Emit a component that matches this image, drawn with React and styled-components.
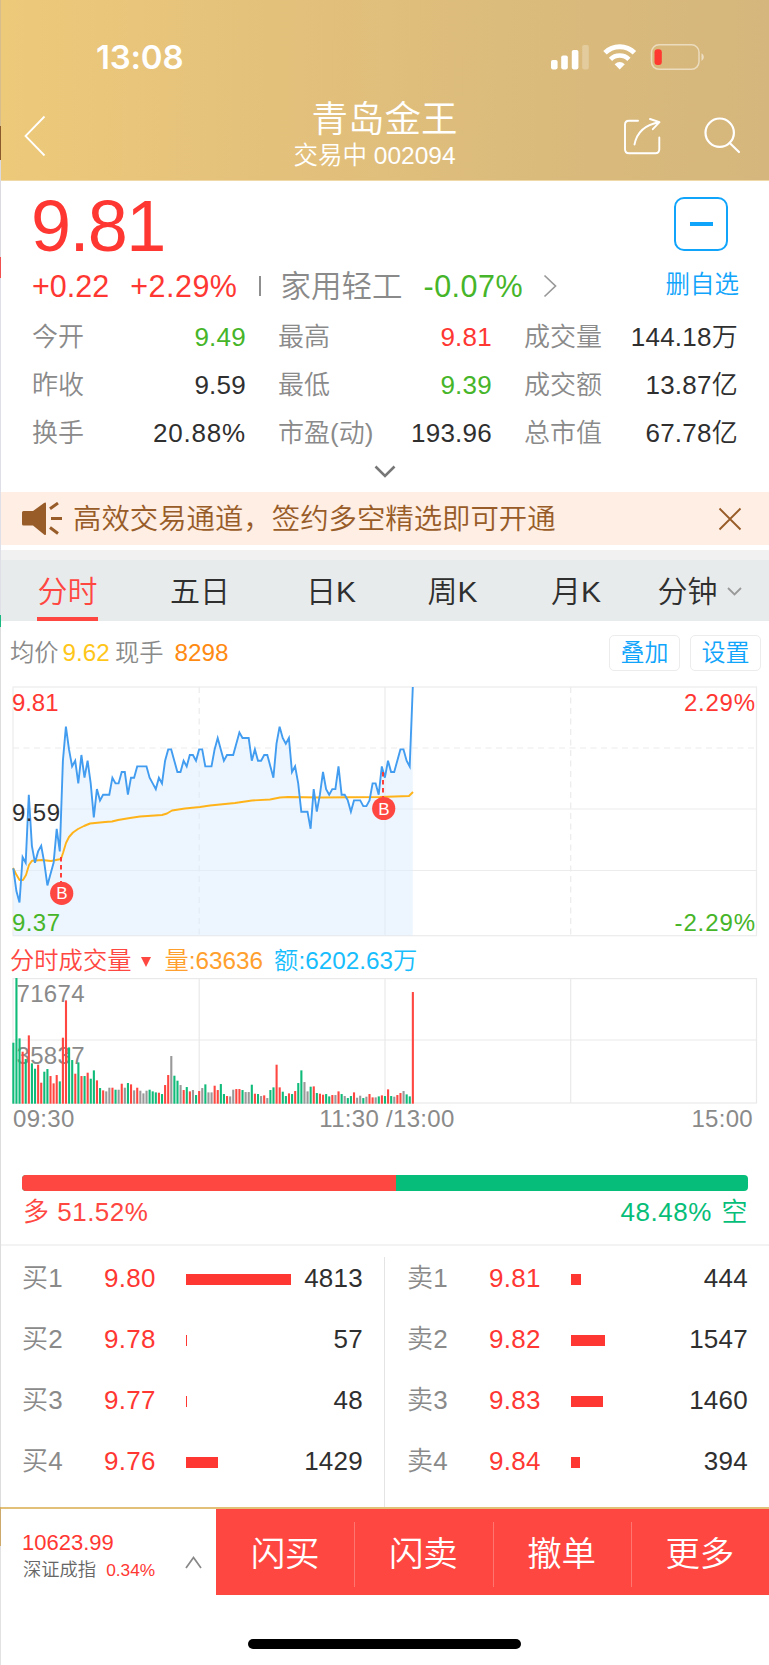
import styled, { createGlobalStyle } from 'styled-components';

const red = '#ff3732';
const fillRed = '#ff4742';
const green = '#46b529';
const barGreen = '#06be79';
const grey = '#8a8a8a';
const dark = '#2f2f2f';
const blue = '#10a4fb';

const GlobalStyle = createGlobalStyle`
* {
    box-sizing: border-box;
}

body {
    margin: 0;
    background: #ffffff;
    font-family: 'Liberation Sans', 'Noto Sans CJK SC', sans-serif;
    font-weight: 350;
}
`

const stats = [
    { name: '今开', value: '9.49', color: green },
    { name: '最高', value: '9.81', color: red },
    { name: '成交量', value: '144.18万' },
    { name: '昨收', value: '9.59' },
    { name: '最低', value: '9.39', color: green },
    { name: '成交额', value: '13.87亿' },
    { name: '换手', value: '20.88%' },
    { name: '市盈(动)', value: '193.96' },
    { name: '总市值', value: '67.78亿' },
]

const buys = [
    { name: '买1', price: '9.80', size: 105, amount: 4813 },
    { name: '买2', price: '9.78', size: 1, amount: 57 },
    { name: '买3', price: '9.77', size: 1, amount: 48 },
    { name: '买4', price: '9.76', size: 32, amount: 1429 },
]

const sells = [
    { name: '卖1', price: '9.81', size: 10, amount: 444 },
    { name: '卖2', price: '9.82', size: 34, amount: 1547 },
    { name: '卖3', price: '9.83', size: 32, amount: 1460 },
    { name: '卖4', price: '9.84', size: 9, amount: 394 },
]

// cents below the day's high, one value per minute
const ticks = [
    32, 36, 38, 30, 31, 19, 28, 31, 29, 28, 31, 35, 33, 31, 25, 29, 13, 7, 11, 14,
    13, 17, 12, 16, 13, 17, 23, 18, 20, 19, 19, 19, 16, 17, 17, 15, 15, 19, 16, 16,
    14, 14, 14, 14, 16, 17, 18, 16, 17, 13, 11, 11, 13, 15, 15, 13, 14, 12, 12, 13,
    11, 11, 14, 14, 14, 11, 9, 11, 13, 12, 12, 12, 10, 8, 9, 9, 9, 13, 11, 13,
    13, 12, 12, 14, 16, 10, 7, 9, 10, 9, 15, 14, 17, 22, 22, 22, 25, 18, 22, 19,
    15, 18, 19, 18, 18, 14, 19, 19, 20, 22, 20, 20, 20, 21, 21, 20, 17, 17, 19, 14,
    16, 13, 15, 15, 13, 11, 11, 13, 14, 0,
]

// direction (r up, g down, n flat) and bar height
const volumes = 'g183 g377 g196 r156 g134 r205 g121 g105 r117 r63 g96 g104 r83 r61 r86 g67 r198 r310 g169 g131 r90 g124 r83 g83 r93 g75 g100 r70 g47 r40 n37 n48 r48 g42 n42 r60 n48 g62 r58 n40 r48 n39 n31 n39 g42 g37 g34 r33 g29 r56 r86 n143 g84 g69 n56 r41 g50 r37 n41 g26 r38 n47 g58 n34 n34 r54 r41 g59 g29 r23 n22 n42 r44 r44 g41 n35 n35 g57 r30 g29 n23 r25 n17 g41 g49 r117 r49 g36 g23 r31 g29 r38 g62 g100 n65 n37 g51 r52 g32 r30 r27 g29 g22 r26 n26 r37 g29 n23 g17 g23 r34 n18 n24 g17 n21 r29 r19 n19 g22 r25 g23 r43 g23 n21 r26 r32 n38 g28 g22 r335'.split(' ')
const volumeColors = { r: '#ff4742', g: '#10bb7a', n: '#999999' }

const step = 3.097
const pointX = i => 13.3 + i * step
const line = ticks.map((t, i) => `${pointX(i).toFixed(1)},${(1 + t * 5.67).toFixed(1)}`).join(' ')
const average = '13,182 16,188 19.5,194 23,194 26,189 29,179 32,174.8 42,174 51,175 61,173 63,167 66,157 69,151 73,146.5 78,143 84,140 90,137.5 105,136 112,135.5 118,134 130,132 140,130.5 162,129 167,127.5 172,124.5 185,122.5 200,121 210,119.5 220,118.5 235,117 252,114.5 270,113.5 280,111.5 288,111 320,111.5 380,111 395,110.5 409,110 413,106'

function StatusIcons() {
    return (
        <svg width="156" height="28" viewBox="550 43 156 28">
            <rect x="551" y="60" width="6.6" height="9.4" rx="1.8" fill="#fff" />
            <rect x="561.2" y="55.5" width="6.6" height="13.9" rx="1.8" fill="#fff" />
            <rect x="571.8" y="50" width="6.6" height="19.4" rx="1.8" fill="#fff" />
            <rect x="582.2" y="45" width="6.6" height="24.4" rx="1.8" fill="#fff" opacity="0.25" />
            <path d="M605 52.8a21 21 0 0 1 29.4 0" fill="none" stroke="#fff" strokeWidth="5" />
            <path d="M610.5 59.3a13 13 0 0 1 18.4 0" fill="none" stroke="#fff" strokeWidth="4.6" />
            <path d="M614.6 64.3q5.1-4.6 10.2 0l-5.1 5.2z" fill="#fff" />
            <rect x="651.5" y="44.8" width="47.5" height="24.5" rx="7.5" fill="none" stroke="#fff" strokeWidth="1.5" opacity="0.5" />
            <rect x="654.5" y="49.3" width="7.3" height="15.6" rx="3" fill="#ff3830" />
            <path d="M701.5 53.2q2.3 1 2.3 3.9t-2.3 3.9z" fill="#fff" opacity="0.55" />
        </svg>
    )
}

function PriceChart() {
    return (
        <Chart width="768" height="252" viewBox="1 0 768 252">
            <g stroke="#ececec" strokeWidth="1.2" fill="none">
                <rect x="13" y="1" width="743.5" height="248.7" />
                <path d="M13 123H756M13 184.5H756M385 1V249.5" />
                <path d="M13 62H756M199.2 1V249.5M570.7 1V249.5" strokeDasharray="6 4.5" />
            </g>
            <polygon points={`13.3,249.5 ${line} 412.8,249.5`} fill="#dcedfd" opacity="0.5" />
            <polyline points={average} fill="none" stroke="#ffb31a" strokeWidth="1.9" strokeLinejoin="round" />
            <polyline points={line} fill="none" stroke="#429cf0" strokeWidth="1.9" strokeLinejoin="miter" />
            <g fontSize="24">
                <text x="12" y="25" fill={red} textLength="46.5">9.81</text>
                <text x="12" y="135" fill={dark} textLength="48">9.59</text>
                <text x="12" y="245" fill={green} textLength="48">9.37</text>
                <text x="684" y="25" fill={red} textLength="71">2.29%</text>
                <text x="674.5" y="245" fill={green} textLength="80.5">-2.29%</text>
            </g>
            <BuyMark x={61.7} y={207.3} top={171} />
            <BuyMark x={383.7} y={122.5} top={86} />
        </Chart>
    )
}

function BuyMark({ x, y, top }) {
    return (
        <g>
            <path d={`M${x - 0.7} ${top}V${y - 11}`} stroke={red} strokeWidth="1.9" strokeDasharray="4.5 3.5" />
            <circle cx={x} cy={y} r="11.6" fill={fillRed} />
            <text x={x + 0.2} y={y + 6} fill="#fff" fontSize="17" textAnchor="middle">B</text>
        </g>
    )
}

function VolumeChart() {
    return (
        <Chart width="768" height="127" viewBox="1 977 768 127">
            <g stroke="#e9e9e9" strokeWidth="1.2" fill="none">
                <rect x="13" y="978.6" width="743.5" height="124.4" />
                <path d="M13 1040H756M199.2 978V1103M385 978V1103M570.7 978V1103" />
            </g>
            <text x="16.5" y="1002" fontSize="24" textLength="68" fill={grey}>71674</text>
            <text x="16.5" y="1063.5" fontSize="24" textLength="68" fill={grey}>35837</text>
            {volumes.map((v, i) => {
                const h = Number(v.slice(1)) / 3
                return <rect key={i} x={pointX(i) - 1} y={1103.7 - h} width="2.1" height={h} fill={volumeColors[v[0]]} />
            })}
        </Chart>
    )
}

function Orders({ rows }) {
    return (
        <OrderList>
            {rows.map(row => (
                <Order key={row.name}>
                    <OrderName>{row.name}</OrderName>
                    <Price>{row.price}</Price>
                    <Depth style={{ width: row.size }} />
                    <Amount>{row.amount}</Amount>
                </Order>
            ))}
        </OrderList>
    )
}

export default function App() {
    return (
        <Page>
            <GlobalStyle />
            <Edge />
            <Screen>
                <Header>
                    <StatusBar>
                        <Time>13:08</Time>
                        <StatusIcons />
                    </StatusBar>
                    <Nav>
                        <svg width="22" height="42" viewBox="24 115 22 42" fill="none" stroke="#fff" strokeWidth="1.8">
                            <path d="M44.5 116.5L25.5 136l19 19.5" />
                        </svg>
                        <Titles>
                            <Title>青岛金王</Title>
                            <SubTitle>交易中 002094</SubTitle>
                        </Titles>
                        <svg width="120" height="40" viewBox="622 116 120 40" fill="none" stroke="#fff" strokeWidth="1.9" strokeLinecap="round" strokeLinejoin="round">
                            <path d="M638 120.7h-9q-4 0-4 4v24.6q0 4 4 4h26.3q4 0 4-4V137.500" />
                            <path d="M634.5 144.5q3.500-18.500 24.500-22.300M650 119l9.500 3.200-6.700 7" />
                            <circle cx="719.700" cy="132.700" r="14.200" strokeWidth="2.200" />
                            <path d="M729.700 143l9.300 9" strokeWidth="2.200" />
                        </svg>
                    </Nav>
                </Header>

                <Quote>
                    <QuoteTop>
                        <div>
                            <Current>9.81</Current>
                            <Change>
                                <span>+0.22</span>
                                <Percent>+2.29%</Percent>
                                <Separator />
                                <Industry>家用轻工</Industry>
                                <IndustryChange>-0.07%</IndustryChange>
                                <svg width="15" height="24" viewBox="0 0 15 24" fill="none" stroke="#999" strokeWidth="1.700">
                                    <path d="M1.500 1.500l11 10.500-11 10.500" />
                                </svg>
                            </Change>
                        </div>
                        <Watch>
                            <WatchBox><i /></WatchBox>
                            <span>删自选</span>
                        </Watch>
                    </QuoteTop>
                    <Stats>
                        {stats.map(stat => (
                            <Stat key={stat.name}>
                                <Label>{stat.name}</Label>
                                <Value color={stat.color} $wide={stat.value.endsWith('%')}>{stat.value}</Value>
                            </Stat>
                        ))}
                    </Stats>
                    <Expand>
                        <svg width="22" height="14" viewBox="0 0 22 14" fill="none" stroke="#777" strokeWidth="2.600">
                            <path d="M1.500 1.500l9.500 9.500 9.500-9.500" />
                        </svg>
                    </Expand>
                </Quote>

                <Notice>
                    <svg width="42" height="34" viewBox="21 502 42 34">
                        <path d="M23.500 511h9.500l11-8q2-1.300 2 .7v30q0 2-2 .7l-11-8.900h-9.500q-1.500 0-1.500-1.500v-11.500q0-1.500 1.500-1.500z" fill="#985c28" />
                        <path d="M50 508.800l8-5.700M51 518.500h11M50 527.500l8 6" fill="none" stroke="#985c28" strokeWidth="3" />
                    </svg>
                    <p>高效交易通道，签约多空精选即可开通</p>
                    <svg width="24" height="24" viewBox="0 0 24 24" fill="none" stroke="#985c28" strokeWidth="1.900">
                        <path d="M1.500 1.500l21 21M22.500 1.500l-21 21" />
                    </svg>
                </Notice>

                <Tabs>
                    <Tab $width={61} $active>分时</Tab>
                    <Tab $width={60} $left={72}>五日</Tab>
                    <Tab $width={50} $left={76}>日K</Tab>
                    <Tab $width={51} $left={71}>周K</Tab>
                    <Tab $width={50} $left={73}>月K</Tab>
                    <Tab $width={85} $left={56}>
                        分钟
                        <svg width="15" height="9" viewBox="0 0 15 9" fill="none" stroke="#999" strokeWidth="1.800">
                            <path d="M1 1l6.500 6.500L14 1" />
                        </svg>
                    </Tab>
                </Tabs>

                <Info>
                    <Legend color={grey}>均价</Legend>
                    <Legend color="#ffc61a" $left={4}>9.62</Legend>
                    <Legend color={grey} $left={5}>现手</Legend>
                    <Legend color="#ff8a12" $left={11}>8298</Legend>
                    <Buttons>
                        <Button>叠加</Button>
                        <Button>设置</Button>
                    </Buttons>
                </Info>
                <PriceChart />
                <VolumeInfo>
                    <Legend color={fillRed}>分时成交量</Legend>
                    <svg width="10" height="10" viewBox="0 0 10 10">
                        <path d="M0 0h10L5 10z" fill={fillRed} />
                    </svg>
                    <Legend color="#ff9f2e">量:63636</Legend>
                    <Legend color="#18bdfc" $left={11}>额:6202.63万</Legend>
                </VolumeInfo>
                <VolumeChart />
                <Hours>
                    <span>09:30</span>
                    <span>11:30 /13:00</span>
                    <span>15:00</span>
                </Hours>

                <Balance>
                    <BalanceBar><i /></BalanceBar>
                    <BalanceText>
                        <span>多 51.52%</span>
                        <span>48.48% 空</span>
                    </BalanceText>
                </Balance>

                <Book>
                    <Orders rows={buys} />
                    <Orders rows={sells} />
                </Book>

                <Footer>
                    <Index>
                        <div>
                            <strong>10623.99</strong>
                            <p>深证成指<em>0.34%</em></p>
                        </div>
                        <svg width="17" height="13" viewBox="0 0 17 13" fill="none" stroke="#888" strokeWidth="1.700">
                            <path d="M1 12l7.500-10.500L16 12" />
                        </svg>
                    </Index>
                    <Action>闪买</Action>
                    <Action>闪卖</Action>
                    <Action>撤单</Action>
                    <Action>更多</Action>
                </Footer>
                <Home><i /></Home>
            </Screen>
        </Page>
    )
}

const Page = styled.div`
display: flex;
width: 769px;
height: 1665px;
overflow: hidden;
`

const Edge = styled.div`
width: 1px;
background: linear-gradient(#d8bd8c 0 126px, #8a5a2c 126px 160px, #dadae0 160px 257px, #ef5050 257px 278px, #dfdfe8 278px 615px, #18b880 615px 627px, #dddddd 627px 1507px, #cda96b 1507px 1546px, #e2e2e2 1546px);
`

const Screen = styled.main`
width: 768px;
display: flex;
flex-direction: column;

svg {
    display: block;
    flex-shrink: 0;
}
`

const Header = styled.header`
height: 181px;
background: linear-gradient(91deg, #edc97a 0%, #e4c17b 35%, #dcbc7c 65%, #d5b67c 100%);
border-bottom: 1px solid #efd9a9;
color: #ffffff;
`

const StatusBar = styled.div`
height: 92px;
padding: 22px 63px 0 95px;
display: flex;
align-items: center;
justify-content: space-between;
`

const Time = styled.div`
font-family: Inter, sans-serif;
font-size: 33px;
font-weight: 600;
line-height: 42px;
letter-spacing: -0.2px;
`

const Nav = styled.nav`
height: 88px;
padding: 0 27px 0 23px;
display: flex;
align-items: center;
justify-content: space-between;
`

const Titles = styled.div`
margin: -5px 0 0 83px;
display: flex;
flex-direction: column;
align-items: flex-end;
`

const Title = styled.h1`
margin: 0;
font-size: 36.5px;
font-weight: 350;
line-height: 45px;
`

const SubTitle = styled.div`
margin-right: 2px;
font-size: 24.5px;
line-height: 28px;
`

const Quote = styled.section`
height: 311px;
padding: 10px 30px 0 31px;
`

const QuoteTop = styled.div`
display: flex;
justify-content: space-between;
`

const Current = styled.div`
margin-left: -1px;
height: 70px;
font-size: 72px;
line-height: 70px;
letter-spacing: -1.6px;
color: ${red};
`

const Change = styled.div`
height: 50px;
display: flex;
align-items: center;
font-size: 30.5px;
line-height: 50px;
color: ${red};
`

const Percent = styled.span`
margin-left: 21px;
letter-spacing: 0.5px;
`

const Separator = styled.i`
width: 2px;
height: 20px;
margin: 0 19px 0 22px;
background: #8f8f8f;
`

const Industry = styled.div`
color: ${grey};
`

const IndustryChange = styled.div`
margin: 0 20px 0 21px;
letter-spacing: 0.5px;
color: ${green};
`

const Watch = styled.div`
padding-top: 6px;
display: flex;
flex-direction: column;
align-items: center;
font-size: 24.5px;
line-height: 36px;
color: ${blue};

span {
    margin-top: 16px;
}
`

const WatchBox = styled.div`
width: 54px;
height: 54px;
margin-left: -2px;
border: 2px solid ${blue};
border-radius: 10px;
display: flex;
align-items: center;
justify-content: center;

i {
    width: 23px;
    height: 4px;
    background: ${blue};
}
`

const Stats = styled.div`
margin-top: 2px;
display: grid;
grid-template-columns: 214px 214px 214px;
column-gap: 32px;
`

const Stat = styled.div`
height: 48px;
display: flex;
align-items: center;
justify-content: space-between;
white-space: nowrap;
`

const Label = styled.span`
font-size: 26px;
line-height: 48px;
color: ${grey};
`

const Value = styled.span`
font-size: 26px;
line-height: 48px;
letter-spacing: ${props => props.$wide ? 0.8 : 0.25}px;
color: ${props => props.color || dark};
`

const Expand = styled.div`
padding: 8px 2px 0 0;
display: flex;
justify-content: center;
`

const Notice = styled.div`
height: 53px;
padding: 0 27px 0 20px;
background: #feeee4;
display: flex;
align-items: center;

p {
    margin: 0;
    padding: 2px 0 0 10px;
    flex: 1;
    font-size: 28.4px;
    line-height: 51px;
    color: #985c28;
}
`

const Tabs = styled.div`
height: 71px;
margin-top: 5px;
padding-left: 36px;
border-top: 10px solid #f1f1f1;
background: #e8ebec;
display: flex;
`

const Tab = styled.div`
width: ${props => props.$width}px;
height: 61px;
margin-left: ${props => props.$left || 0}px;
border-bottom: 4px solid ${props => props.$active ? fillRed : 'transparent'};
display: flex;
align-items: center;
justify-content: center;
gap: 9px;
font-size: 30px;
line-height: 57px;
padding-top: 5px;
white-space: nowrap;
color: ${props => props.$active ? fillRed : dark};
`

const Info = styled.div`
height: 65px;
padding: 0 8px 1px 9px;
display: flex;
align-items: center;
`

const Legend = styled.span`
margin-left: ${props => props.$left || 0}px;
font-size: 24.3px;
line-height: 30px;
color: ${props => props.color};
`

const Buttons = styled.div`
margin: -1px 0 0 auto;
display: flex;
gap: 10px;
`

const Button = styled.button`
width: 71px;
height: 36px;
padding: 0;
border: 1.5px solid #ececec;
border-radius: 5px;
background: #ffffff;
font-family: inherit;
font-size: 24px;
font-weight: 350;
line-height: 33px;
color: ${blue};
`

const Chart = styled.svg`
font-family: 'Liberation Sans', sans-serif;
`

const VolumeInfo = styled.div`
height: 39px;
padding: 6px 0 0 9px;
display: flex;
align-items: center;

svg {
    margin: 3px 13px 0 10px;
}
`

const Hours = styled.div`
height: 31px;
padding: 0 16px 0 12px;
display: grid;
grid-template-columns: 1fr auto 1fr;
font-size: 24px;
line-height: 29px;
letter-spacing: 0.3px;
color: ${grey};

span:nth-child(2) {
    margin-left: 8px;
}

span:last-child {
    text-align: right;
}
`

const Balance = styled.section`
height: 111px;
padding: 40px 21px 0 21px;
border-bottom: 2px solid #f3f3f3;
`

const BalanceBar = styled.div`
height: 16px;
border-radius: 4px;
overflow: hidden;
background: ${barGreen};

i {
    display: block;
    width: 51.52%;
    height: 16px;
    background: ${fillRed};
}
`

const BalanceText = styled.div`
padding: 0 0 0 1px;
display: flex;
justify-content: space-between;
font-size: 26px;
line-height: 42px;
letter-spacing: 0.5px;
color: ${fillRed};

span:last-child {
    word-spacing: 2px;
    color: ${barGreen};
}
`

const Book = styled.section`
height: 261px;
padding-top: 11px;
display: flex;
`

const OrderList = styled.div`
width: 384px;
padding: 0 21px 0 22px;

&:first-child {
    border-right: 1px solid #e4e4e4;
    padding: 0 21px 0 21px;
}
`

const Order = styled.div`
height: 61px;
padding-bottom: 18px;
display: grid;
grid-template-columns: 82px 82px 105px 1fr;
align-items: center;
font-size: 26px;
line-height: 43px;
letter-spacing: 0.25px;
`

const OrderName = styled.span`
color: ${grey};
`

const Price = styled.span`
color: ${red};
`

const Depth = styled.i`
height: 11px;
margin-top: 2px;
background: ${red};
`

const Amount = styled.span`
text-align: right;
color: ${dark};
`

const Footer = styled.footer`
height: 88px;
border-top: 2px solid #e3c078;
display: flex;
`

const Index = styled.div`
width: 215px;
padding: 0 14px 0 21px;
display: flex;
align-items: center;
justify-content: space-between;

div {
    padding-top: 8px;
}

strong {
    display: block;
    font-size: 22px;
    font-weight: 400;
    line-height: 28px;
    color: ${red};
}

p {
    margin: 0;
    padding-left: 1px;
    font-size: 18.3px;
    line-height: 26px;
    color: #666666;
    white-space: nowrap;
}

em {
    margin-left: 10px;
    font-size: 17.3px;
    font-style: normal;
    color: ${red};
}

svg {
    margin-top: 20px;
}
`

const Action = styled.div`
flex: 1;
padding-top: 4px;
background: ${fillRed};
display: flex;
align-items: center;
justify-content: center;
font-size: 34.5px;
line-height: 65px;
color: #ffffff;

& + & {
    background: linear-gradient(#ff7671, #ff7671) 0 13px / 1px 65px no-repeat ${fillRed};
}
`

const Home = styled.div`
height: 70px;
padding: 44px 2px 0 0;

i {
    display: block;
    width: 273px;
    height: 10px;
    margin: 0 auto;
    border-radius: 5px;
    background: #000000;
}
`
